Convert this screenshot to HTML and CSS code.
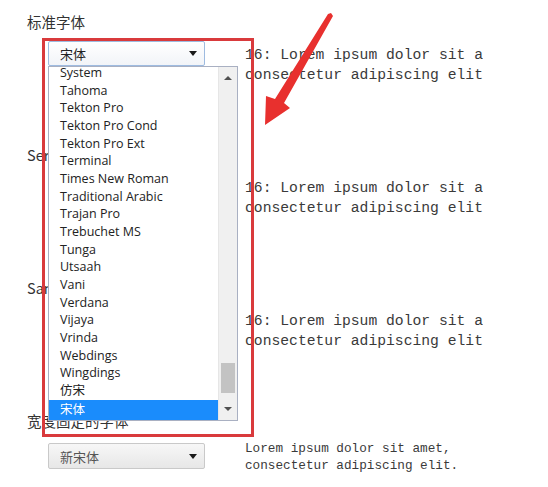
FILE: index.html
```html
<!DOCTYPE html>
<html lang="zh-CN">
<head>
<meta charset="utf-8">
<title>字体设置</title>
<link rel="stylesheet" href="styles.css">
</head>
<body>
<div class="page">
  <section class="group">
    <div class="label">标准字体</div>
    <div class="row">
      <div class="select select-focus"><span>宋体</span><i class="caret"></i></div>
      <div class="sample"><div>16: Lorem ipsum dolor sit amet,</div><div>consectetur adipiscing elit.</div></div>
    </div>
  </section>
  <section class="group">
    <div class="label">Serif 字体</div>
    <div class="row">
      <div class="select"><span>Times New Roman</span><i class="caret"></i></div>
      <div class="sample"><div>16: Lorem ipsum dolor sit amet,</div><div>consectetur adipiscing elit.</div></div>
    </div>
  </section>
  <section class="group">
    <div class="label">Sans-serif 字体</div>
    <div class="row">
      <div class="select"><span>Arial</span><i class="caret"></i></div>
      <div class="sample"><div>16: Lorem ipsum dolor sit amet,</div><div>consectetur adipiscing elit.</div></div>
    </div>
  </section>
  <section class="group">
    <div class="label">宽度固定的字体</div>
    <div class="row">
      <div class="select select-plain"><span>新宋体</span><i class="caret"></i></div>
      <div class="sample sample-small"><div>Lorem ipsum dolor sit amet,</div><div>consectetur adipiscing elit.</div></div>
    </div>
  </section>

  <div class="dropdown">
    <ul class="options">
      <li>System</li>
      <li>Tahoma</li>
      <li>Tekton Pro</li>
      <li>Tekton Pro Cond</li>
      <li>Tekton Pro Ext</li>
      <li>Terminal</li>
      <li>Times New Roman</li>
      <li>Traditional Arabic</li>
      <li>Trajan Pro</li>
      <li>Trebuchet MS</li>
      <li>Tunga</li>
      <li>Utsaah</li>
      <li>Vani</li>
      <li>Verdana</li>
      <li>Vijaya</li>
      <li>Vrinda</li>
      <li>Webdings</li>
      <li>Wingdings</li>
      <li>仿宋</li>
      <li class="selected">宋体</li>
    </ul>
    <div class="scrollbar">
      <i class="sb-up"></i>
      <div class="sb-track"><div class="sb-thumb"></div></div>
      <i class="sb-down"></i>
    </div>
  </div>

  <div class="highlight-box"></div>
  <svg class="arrow" width="548" height="487" viewBox="0 0 548 487">
    <polygon points="331,13 333,16 284,103 290,108 265,125 266,96 275,99 328,14" fill="#e8302e"/>
  </svg>
</div>
</body>
</html>
```

FILE: styles.css
```css
html, body {
  margin: 0;
  padding: 0;
  background: #ffffff;
}

.page {
  position: relative;
  width: 548px;
  height: 487px;
  overflow: hidden;
  padding: 12px 0 0 27px;
  box-sizing: border-box;
  display: flex;
  flex-direction: column;
  gap: 60px;
  font-family: "Noto Sans CJK SC", "Noto Sans", sans-serif;
}

.label {
  font-size: 14.5px;
  line-height: 20px;
  height: 20px;
  color: #333333;
  white-space: nowrap;
}

.row {
  display: flex;
  margin-top: 9px;
  padding-left: 21px;
  gap: 40px;
  align-items: flex-start;
}

.select {
  width: 157px;
  height: 25px;
  box-sizing: border-box;
  border: 1px solid #c9c9c9;
  border-radius: 2px;
  background: linear-gradient(#f7f7f7, #e7e7e7);
  display: flex;
  align-items: center;
  justify-content: space-between;
  padding: 0 7px 0 11px;
  font-size: 13px;
  color: #555555;
  flex: none;
}

.select-focus {
  border-color: #9ebbe0;
  background: linear-gradient(#ffffff, #f2f4f8);
  color: #222222;
}

.select-plain {
  margin-top: 3px;
  height: 26px;
}

.caret {
  width: 0;
  height: 0;
  border-left: 4.5px solid transparent;
  border-right: 4.5px solid transparent;
  border-top: 5px solid #1a1a1a;
}

.sample {
  width: 238px;
  overflow: hidden;
  padding-top: 4px;
  font-family: "Liberation Mono", "DejaVu Sans Mono", monospace;
  font-size: 14.7px;
  line-height: 20px;
  color: #3a3a3a;
  white-space: nowrap;
}

.sample-small {
  padding-top: 0;
  font-size: 12.7px;
  line-height: 17px;
}

.dropdown {
  position: absolute;
  left: 48px;
  top: 66px;
  width: 190px;
  height: 355px;
  box-sizing: border-box;
  border: 1px solid #a9b0c2;
  background: #ffffff;
  display: flex;
  overflow: hidden;
}

.options {
  list-style: none;
  margin: -3px 0 0 0;
  padding: 0;
  flex: 1;
  font-family: "Open Sans", "Noto Sans CJK SC", sans-serif;
  font-size: 12.5px;
  color: #222222;
}

.options li {
  height: 17.68px;
  line-height: 17.68px;
  padding-left: 11px;
  white-space: nowrap;
}

.options li.selected {
  height: 20px;
  line-height: 20px;
  background: #1a8cfc;
  color: #ffffff;
}

.scrollbar {
  width: 18px;
  flex: none;
  background: #f0f0f0;
  border-left: 1px solid #e6e6e6;
  display: flex;
  flex-direction: column;
  align-items: center;
}

.sb-up,
.sb-down {
  width: 0;
  height: 0;
  border-left: 4px solid transparent;
  border-right: 4px solid transparent;
}

.sb-up {
  margin-top: 9px;
  border-bottom: 4px solid #505050;
}

.sb-down {
  margin-bottom: 9px;
  border-top: 4px solid #505050;
}

.sb-track {
  flex: 1;
  width: 100%;
  display: flex;
  flex-direction: column;
  justify-content: flex-end;
  align-items: center;
  padding-bottom: 14px;
}

.sb-thumb {
  width: 14px;
  height: 30px;
  background: #c3c3c3;
}

.highlight-box {
  position: absolute;
  left: 42px;
  top: 38px;
  width: 212px;
  height: 399px;
  box-sizing: border-box;
  border: 3px solid #d93a3c;
  pointer-events: none;
}

.arrow {
  position: absolute;
  left: 0;
  top: 0;
  pointer-events: none;
}
```
